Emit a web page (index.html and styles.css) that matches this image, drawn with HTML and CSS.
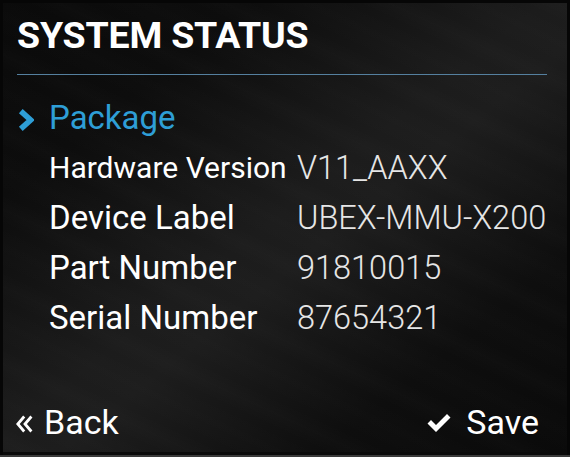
FILE: index.html
```html
<!DOCTYPE html>
<html>
<head>
<meta charset="utf-8">
<link rel="stylesheet" href="styles.css">
</head>
<body>
<div class="screen">
  <h1 class="title">SYSTEM STATUS</h1>
  <div class="divider"></div>
  <div class="list">
    <div class="row active">
      <span class="mark"><svg class="chev" viewBox="0 0 16 22" width="16" height="22"><path d="M2.8 2.2 L12.6 11 L2.8 19.8" fill="none" stroke="currentColor" stroke-width="5.6" stroke-linejoin="miter" stroke-linecap="butt"/></svg></span>
      <span class="label">Package</span>
    </div>
    <div class="row">
      <span class="mark"></span>
      <span class="label fit">Hardware Version</span>
      <span class="value">V11_AAXX</span>
    </div>
    <div class="row">
      <span class="mark"></span>
      <span class="label">Device Label</span>
      <span class="value">UBEX-MMU-X200</span>
    </div>
    <div class="row">
      <span class="mark"></span>
      <span class="label">Part Number</span>
      <span class="value">91810015</span>
    </div>
    <div class="row">
      <span class="mark"></span>
      <span class="label">Serial Number</span>
      <span class="value">87654321</span>
    </div>
  </div>
  <div class="footer">
    <div class="btn back"><svg class="dbl" viewBox="0 0 17 18" width="17" height="18"><path d="M8.2 1.5 L1.8 9 L8.2 16.5 M15.4 1.5 L9 9 L15.4 16.5" fill="none" stroke="currentColor" stroke-width="2.8"/></svg><span>Back</span></div>
    <div class="btn save"><svg class="check" viewBox="0 0 26 20" width="26" height="20"><path d="M1.5 10.5 L5 7 L10 12 L21 1 L24.5 4.5 L10 19 Z" fill="currentColor"/></svg><span>Save</span></div>
  </div>
</div>
</body>
</html>
```

FILE: styles.css
```css
html, body {
  margin: 0;
  padding: 0;
  background: #050505;
}
.screen {
  box-sizing: border-box;
  width: 570px;
  height: 457px;
  display: flex;
  flex-direction: column;
  font-family: Roboto, "Liberation Sans", sans-serif;
  color: #fff;
  background:
    repeating-linear-gradient(25deg, rgba(255,255,255,0) 0px, rgba(255,255,255,0.012) 14px, rgba(255,255,255,0) 28px, rgba(255,255,255,0.007) 50px, rgba(255,255,255,0) 70px),
    linear-gradient(to bottom right, #0a0a0a 0%, #0d0d0d 22%, #1c1c1c 48%, #1d1d1d 55%, #0e0e0e 78%, #0a0a0a 100%);
  box-shadow: inset 3px 3px 0 #060606, inset -3px 0 0 #060606, inset 0 -3px 0 #0a0a0a;
  border-bottom: 2px solid #3a3a3a;
  padding-top: 10px;
}
.title {
  margin: 0;
  padding-left: 17px;
  font-size: 37.5px;
  font-weight: 700;
  line-height: 50px;
  letter-spacing: -0.2px;
}
.divider {
  margin: 14px 23px 0 17px;
  height: 1px;
  background: #55809f;
}
.list {
  margin-top: 18px;
  display: flex;
  flex-direction: column;
}
.row {
  display: flex;
  align-items: center;
  height: 50px;
  line-height: 50px;
  padding-left: 18px;
  font-size: 33px;
}
.mark {
  width: 31px;
  flex-shrink: 0;
  display: flex;
  align-items: center;
  padding-top: 3px;
}
.chev {
  width: 16px;
  height: 22px;
  flex-shrink: 0;
}
.label {
  width: 248px;
  flex-shrink: 0;
  font-weight: 400;
  white-space: nowrap;
}
.label.fit {
  font-size: 30px;
}
.value {
  font-weight: 300;
  font-size: 32.5px;
  color: #e6e6e6;
  white-space: nowrap;
}
.active {
  color: #2e9ed6;
}
.footer {
  margin-top: auto;
  display: flex;
  justify-content: space-between;
  align-items: center;
  padding: 0 31px 8px 16px;
  height: 50px;
  line-height: 50px;
  font-size: 34px;
}
.btn {
  display: flex;
  align-items: center;
}
.dbl {
  width: 17px;
  height: 18px;
  flex-shrink: 0;
  margin-right: 11px;
  margin-top: 3px;
}
.check {
  width: 26px;
  height: 20px;
  flex-shrink: 0;
  margin-right: 14px;
  margin-top: 2px;
}
```
